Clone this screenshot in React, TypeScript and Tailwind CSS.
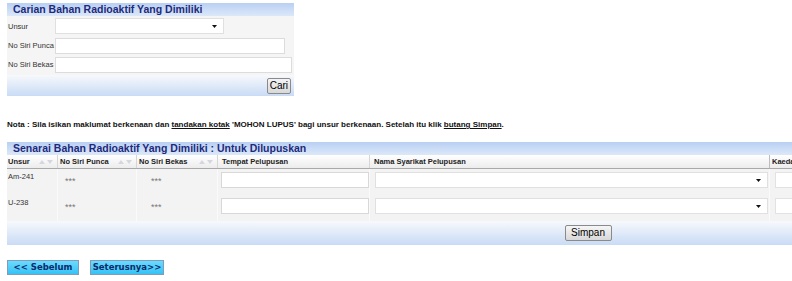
import React from 'react';

const cols = 'grid grid-cols-[51px_79px_81px_152px_400px_90px]';

function SortArrows() {
  return (
    <svg width="14" height="6" viewBox="0 0 14 6" className="ml-auto mr-1 flex-shrink-0">
      <path d="M0 5 L3 1 L6 5 Z" fill="#d4d8de" />
      <path d="M8 1 L14 1 L11 5 Z" fill="#d4d8de" />
    </svg>
  );
}

function Caret() {
  return (
    <svg width="5" height="3" viewBox="0 0 5 3" className="flex-shrink-0">
      <path d="M0 0 L5 0 L2.5 3 Z" fill="#111" />
    </svg>
  );
}

function SelectBox({ className }: { className: string }) {
  return (
    <div className={`flex items-center justify-end bg-white border border-[#e0e0e0] pr-[6px] ${className}`}>
      <Caret />
    </div>
  );
}

function TitleBand({ children }: { children: React.ReactNode }) {
  return (
    <div className="h-[13px] flex items-center pl-[6px] bg-gradient-to-b from-[#b9d0f3] to-[#dce8f9] text-[10.5px] leading-none font-bold text-[#1d2a7c]">
      {children}
    </div>
  );
}

export default function App() {
  const rows = [
    { unsur: 'Am-241' },
    { unsur: 'U-238' },
  ];

  return (
    <div className="w-[792px] h-[281px] overflow-hidden bg-white font-['Liberation_Sans',Arial,sans-serif] text-[#333]">
      {/* Carian panel */}
      <div className="ml-[7px] mt-[3px] w-[287px] bg-[#f5f5f5]">
        <TitleBand>Carian Bahan Radioaktif Yang Dimiliki</TitleBand>
        <div className="flex flex-col gap-[2px] pt-[2px] text-[7.5px]">
          <div className="flex items-start h-[17px]">
            <span className="w-[48px] pl-[1px] pt-[3px]">Unsur</span>
            <SelectBox className="w-[169px] h-[16px]" />
          </div>
          <div className="flex items-center h-[17px]">
            <span className="w-[48px] pl-[1px]">No Siri Punca</span>
            <div className="w-[230px] h-[16px] bg-white border border-[#dcdcdc]" />
          </div>
          <div className="flex items-center h-[17px]">
            <span className="w-[48px] pl-[1px]">No Siri Bekas</span>
            <div className="w-[237px] h-[16px] bg-white border border-[#dcdcdc]" />
          </div>
        </div>
        <div className="h-[21px] mt-[2px] flex items-center justify-end pr-[3px] bg-gradient-to-b from-[#f7f9fc] to-[#c9dbf5]">
          <button className="h-[16px] px-[2px] border border-[#8a8a8a] rounded-[2px] bg-gradient-to-b from-[#f4f4f4] to-[#d8d8d8] text-[10px] leading-none text-black">
            Cari
          </button>
        </div>
      </div>

      {/* Nota */}
      <p className="ml-[7px] mt-[25px] text-[8px] font-bold text-[#111] leading-none">
        Nota : Sila isikan maklumat berkenaan dan <span className="underline">tandakan kotak</span> 'MOHON LUPUS' bagi unsur
        berkenaan. Setelah itu klik <span className="underline">butang Simpan</span>.
      </p>

      {/* Senarai panel */}
      <div className="ml-[7px] mt-[13px] w-[853px] bg-[#f3f3f3]">
        <TitleBand>Senarai Bahan Radioaktif Yang Dimiliki : Untuk Dilupuskan</TitleBand>
        <div className={`${cols} h-[14px] bg-gradient-to-b from-white to-[#ececec] border-b border-[#a9a9a9] text-[7.5px] font-bold text-[#222]`}>
          <div className="flex items-center pl-[1px] border-r border-[#d6d6d6]">Unsur<SortArrows /></div>
          <div className="flex items-center pl-[2px] border-r border-[#d6d6d6]">No Siri Punca<SortArrows /></div>
          <div className="flex items-center pl-[2px] border-r border-[#d6d6d6]">No Siri Bekas<SortArrows /></div>
          <div className="flex items-center pl-[4px] border-r border-[#d6d6d6]">Tempat Pelupusan</div>
          <div className="flex items-center pl-[4px] border-r border-[#bdbdbd]">Nama Syarikat Pelupusan</div>
          <div className="flex items-center pl-[2px]">Kaedah</div>
        </div>
        {rows.map((r) => (
          <div key={r.unsur} className={`${cols} h-[26px] text-[7.5px]`}>
            <div className="pl-[1px] pt-[2px] border-r border-[#fafafa]">{r.unsur}</div>
            <div className="pl-[7px] pt-[6px] text-[9px] text-[#777] border-r border-[#fafafa]">***</div>
            <div className="pl-[14px] pt-[6px] text-[9px] text-[#777] border-r border-[#fafafa]">***</div>
            <div className="pl-[3px] pt-[3px] border-r border-[#fafafa]">
              <div className="w-[148px] h-[16px] bg-white border border-[#d8d8d8]" />
            </div>
            <div className="pl-[5px] pt-[3px] border-r border-[#fafafa]">
              <SelectBox className="w-[393px] h-[16px]" />
            </div>
            <div className="pl-[5px] pt-[3px]">
              <div className="w-[60px] h-[16px] bg-white border border-[#e2e2e2]" />
            </div>
          </div>
        ))}
        <div className="h-[24px] flex items-center bg-gradient-to-b from-[#f7f9fc] to-[#c9dbf5]">
          <div className="w-[771px] flex justify-center pl-[391px]">
            <button className="h-[16px] w-[47px] border border-[#8a8a8a] rounded-[2px] bg-gradient-to-b from-[#f6f6f6] to-[#d8d8d8] text-[10px] leading-none text-black">
              Simpan
            </button>
          </div>
        </div>
      </div>

      {/* Nav buttons */}
      <div className="ml-[7px] mt-[15px] flex gap-[11px] font-['DejaVu_Sans',Verdana,sans-serif] text-[8.5px] font-bold text-[#0a2a6a]">
        <button className="h-[15px] w-[72px] border border-[#7f9cb8] bg-gradient-to-b from-[#6adaff] to-[#33c2f5] leading-none">
          &lt;&lt; Sebelum
        </button>
        <button className="h-[15px] w-[74px] border border-[#7f9cb8] bg-gradient-to-b from-[#6adaff] to-[#33c2f5] leading-none">
          Seterusnya&gt;&gt;
        </button>
      </div>
    </div>
  );
}
